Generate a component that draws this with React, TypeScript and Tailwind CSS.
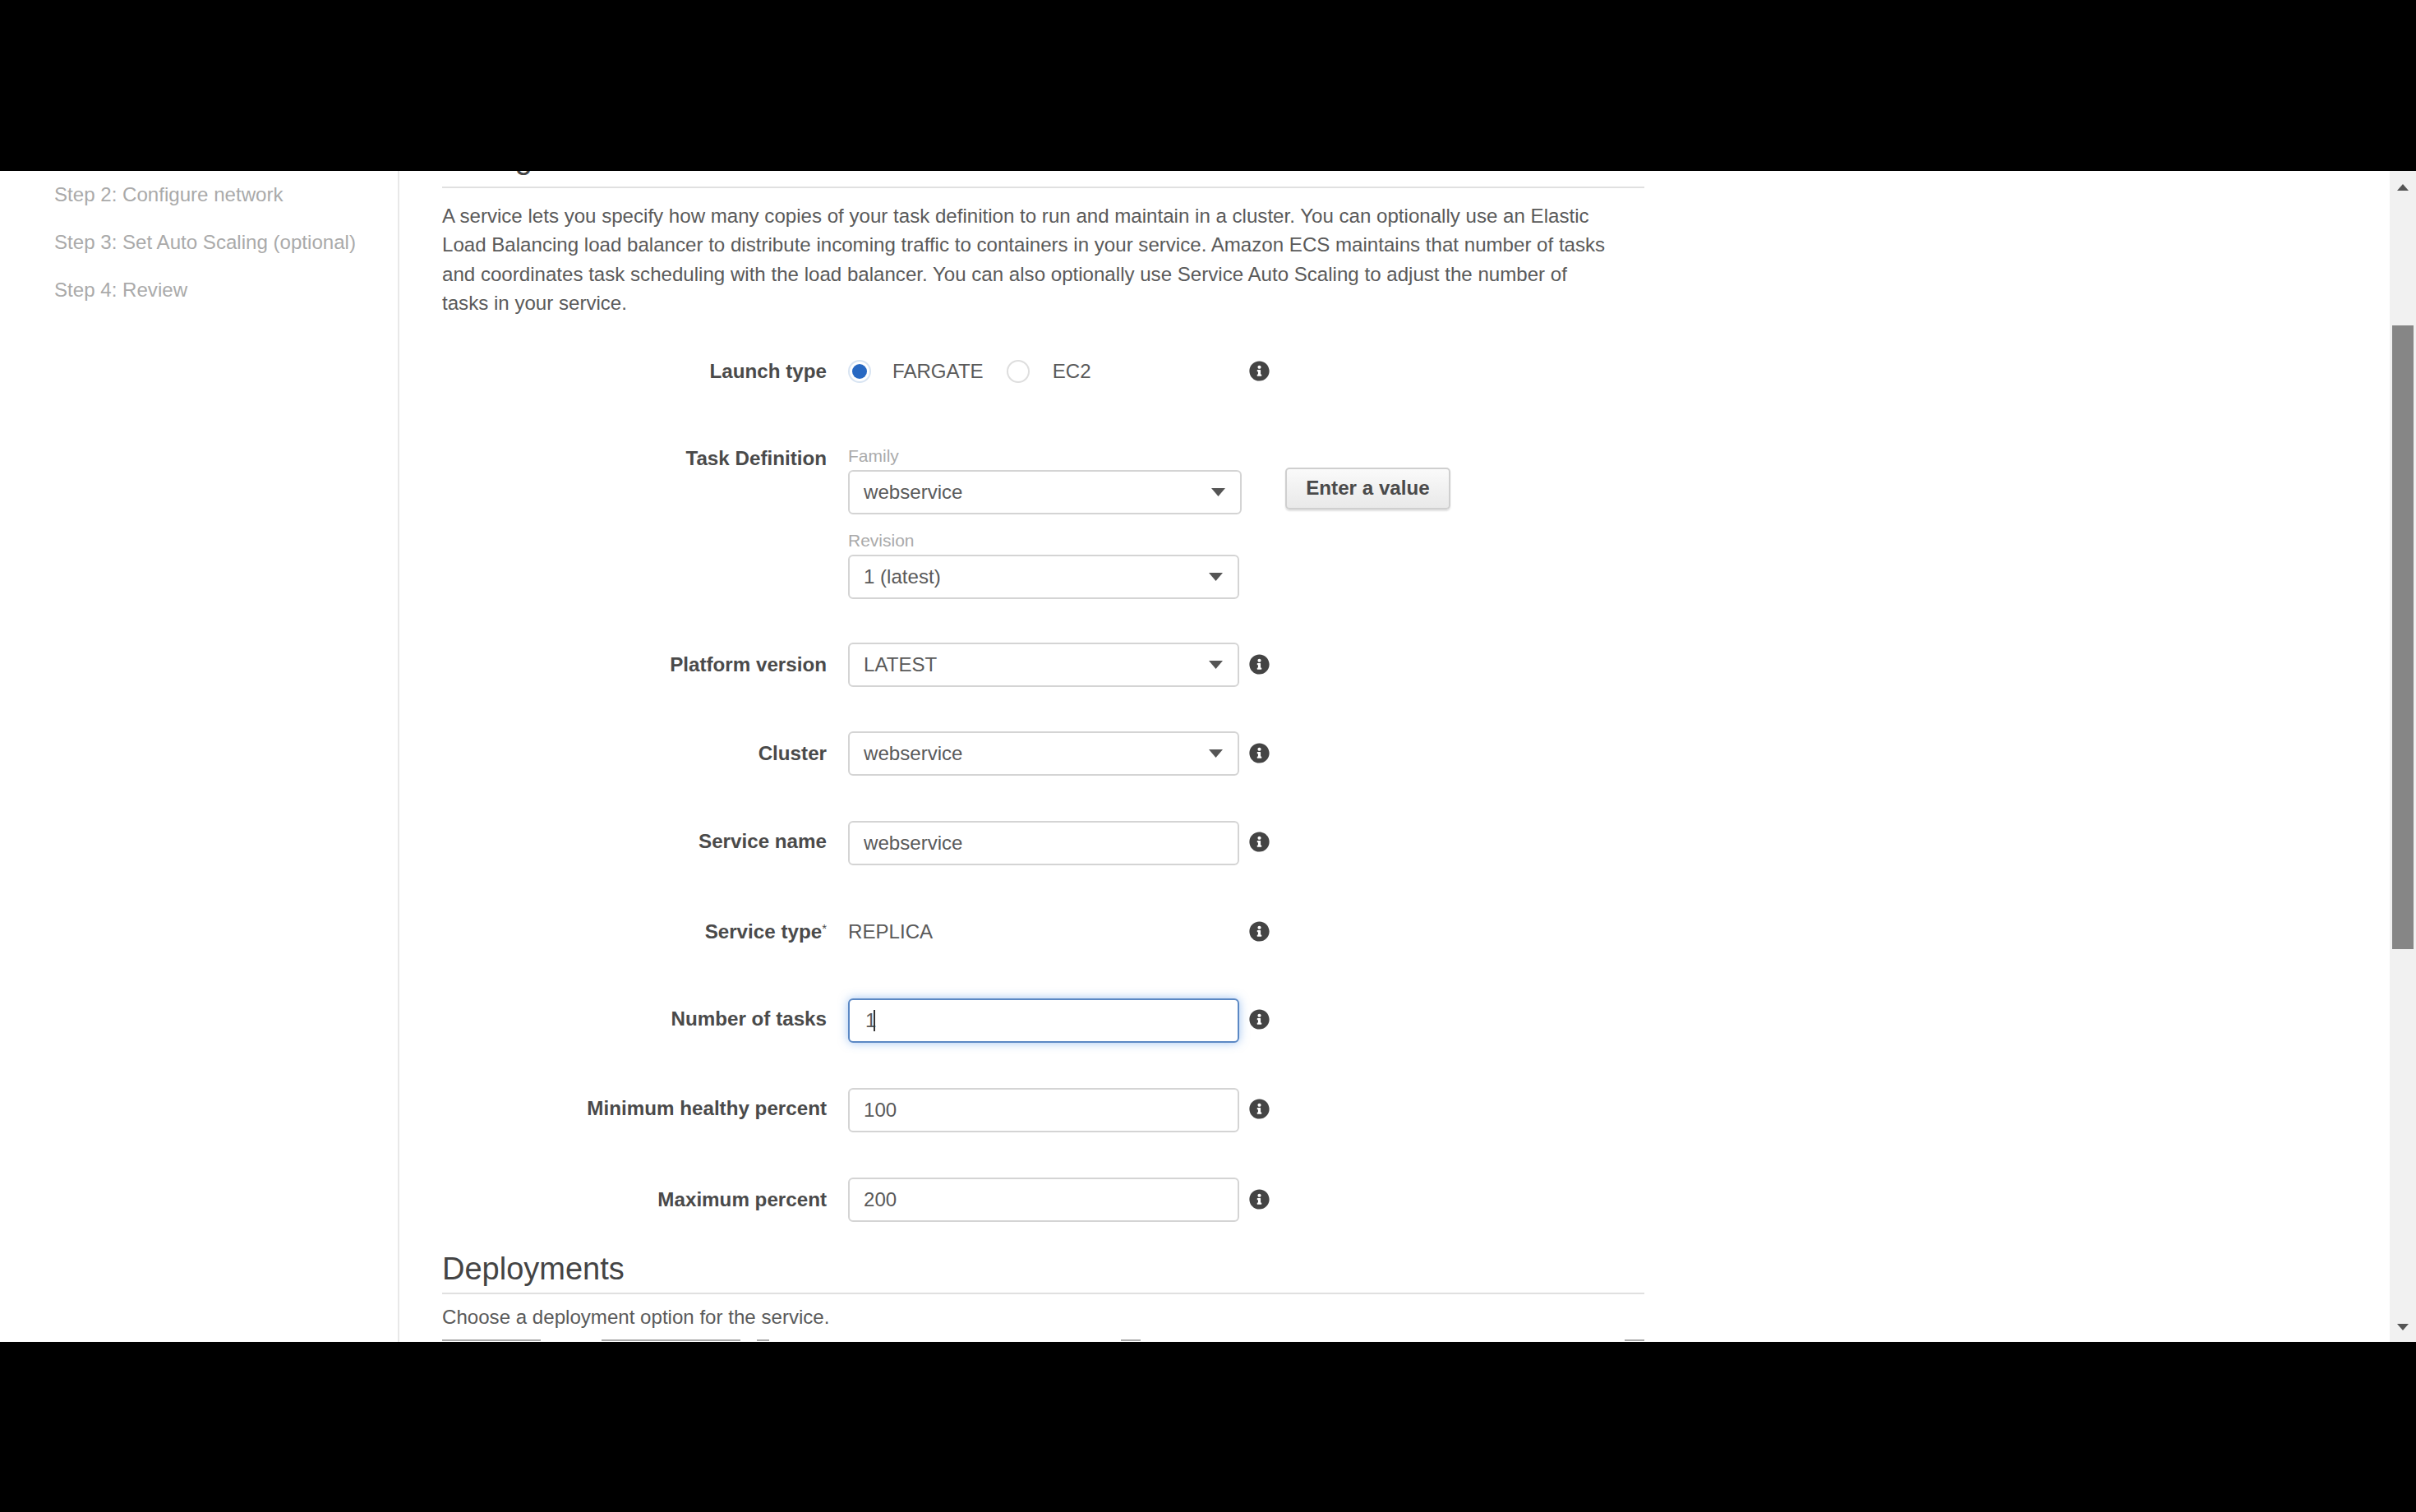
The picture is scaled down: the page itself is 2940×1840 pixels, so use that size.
import { FaInfoCircle } from "react-icons/fa";

function Info({ up }: { up?: boolean }) {
  return <FaInfoCircle className={`ml-[12px] h-[25px] w-[25px] shrink-0 text-[#444] ${up ? "-mt-[3px]" : ""}`} />;
}

function Caret({ className }: { className: string }) {
  return (
    <svg viewBox="0 0 17 10" className={className}>
      <path d="M0 0H17L8.5 10Z" fill="#555" />
    </svg>
  );
}

function Label({ children, up }: { children: React.ReactNode; up?: boolean }) {
  return (
    <div className={`w-[468px] shrink-0 text-right text-[24.2px] leading-[36px] font-bold text-[#4a4a4a] ${up ? "-mt-[3px]" : ""}`}>
      {children}
    </div>
  );
}

function SelectBox({ value, wide }: { value: string; wide?: boolean }) {
  return (
    <div
      className={`flex h-[54px] items-center justify-between rounded-[6px] border-2 border-[#d4d4d4] bg-white pr-[18px] pl-[17px] text-[24.1px] text-[#5a5a5a] ${
        wide ? "w-[479px]" : "w-[476px]"
      }`}
    >
      <span>{value}</span>
      <Caret className="h-[10px] w-[17px]" />
    </div>
  );
}

function InputBox({ value }: { value: string }) {
  return (
    <input
      readOnly
      value={value}
      className="h-[54px] w-[476px] rounded-[6px] border-2 border-[#d4d4d4] bg-white pl-[17px] text-[24.1px] text-[#5a5a5a] outline-none"
    />
  );
}

function Row({
  label,
  className,
  up,
  children,
}: {
  label: React.ReactNode;
  className: string;
  up?: boolean;
  children: React.ReactNode;
}) {
  return (
    <div className={`flex h-[54px] items-center ${className}`}>
      <Label up={up}>{label}</Label>
      <div className="ml-[26px] flex items-center">{children}</div>
    </div>
  );
}

export default function App() {
  return (
    <div className="flex h-[1840px] flex-col bg-black font-['Liberation_Sans',Arial,sans-serif]">
      <div className="h-[208px] shrink-0" />
      <div className="flex h-[1425px] shrink-0 bg-white">
        <aside className="flex w-[486px] shrink-0 flex-col gap-[23px] border-r-2 border-[#e8e8e8] pt-[11px] pl-[66px] text-[24.1px] leading-[35px] text-[#aaa]">
          <div>Step 2: Configure network</div>
          <div>Step 3: Set Auto Scaling (optional)</div>
          <div>Step 4: Review</div>
        </aside>

        <main className="min-w-0 flex-1 overflow-hidden pl-[52px]">
          <div className="w-[1463px]">
            <h2 className="-mt-[40px] border-b-2 border-[#e0e0e0] pb-[11px] text-[38px] leading-[48px] font-normal text-[#444]">
              Configure service
            </h2>
            <p className="mt-[16px] text-[24.1px] leading-[35.4px] text-[#5a5a5a]">
              A service lets you specify how many copies of your task definition to run and maintain in a cluster. You can optionally use an Elastic
              <br />
              Load Balancing load balancer to distribute incoming traffic to containers in your service. Amazon ECS maintains that number of tasks
              <br />
              and coordinates task scheduling with the load balancer. You can also optionally use Service Auto Scaling to adjust the number of
              <br />
              tasks in your service.
            </p>

            <Row label="Launch type" className="mt-[38px]">
              <div className="flex w-[476px] items-center text-[24.1px] text-[#5a5a5a]">
                <span className="flex h-[28px] w-[28px] items-center justify-center rounded-full border-2 border-[#d8e4f2]">
                  <span className="h-[18px] w-[18px] rounded-full bg-[#2768c2]" />
                </span>
                <span className="ml-[26px]">FARGATE</span>
                <span className="ml-[28px] h-[28px] w-[28px] rounded-full border-2 border-[#dedede]" />
                <span className="ml-[28px]">EC2</span>
              </div>
              <Info />
            </Row>

            <div className="mt-[61px] flex items-start">
              <Label>Task Definition</Label>
              <div className="ml-[26px] w-[479px]">
                <div className="h-[30px] text-[21px] leading-[30px] text-[#aaa]">Family</div>
                <div className="mt-[2px]">
                  <SelectBox value="webservice" wide />
                </div>
                <div className="mt-[17px] h-[30px] text-[21px] leading-[30px] text-[#aaa]">Revision</div>
                <div className="mt-[2px]">
                  <SelectBox value="1 (latest)" />
                </div>
              </div>
              <button className="mt-[29px] ml-[53px] h-[51px] w-[201px] rounded-[5px] border-2 border-[#cfcfcf] bg-gradient-to-b from-[#fafafa] to-[#e9e9e9] text-[24.2px] font-bold text-[#4a4a4a] shadow-[0_2px_2px_rgba(0,0,0,0.12)]">
                Enter a value
              </button>
            </div>

            <Row label="Platform version" className="mt-[53px]">
              <SelectBox value="LATEST" />
              <Info />
            </Row>
            <Row label="Cluster" className="mt-[54px]">
              <SelectBox value="webservice" />
              <Info />
            </Row>
            <Row label="Service name" className="mt-[55px]" up>
              <InputBox value="webservice" />
              <Info up />
            </Row>
            <Row
              label={
                <>
                  Service type<span className="align-top text-[15px] leading-[28px] font-normal">*</span>
                </>
              }
              className="mt-[54px]"
            >
              <div className="w-[476px] text-[24.1px] text-[#5a5a5a]">REPLICA</div>
              <Info />
            </Row>
            <Row label="Number of tasks" className="mt-[54px]" up>
              <div className="flex h-[54px] w-[476px] items-center rounded-[6px] border-2 border-[#5b88c4] bg-white pl-[19px] text-[24.1px] text-[#5a5a5a] shadow-[0_0_12px_rgba(70,140,230,0.5)]">
                <span>1</span>
                <span className="ml-[-3px] h-[26px] w-[2px] bg-[#333]" />
              </div>
              <Info up />
            </Row>
            <Row label="Minimum healthy percent" className="mt-[55px]" up>
              <InputBox value="100" />
              <Info up />
            </Row>
            <Row label="Maximum percent" className="mt-[55px]">
              <InputBox value="200" />
              <Info />
            </Row>

            <h2 className="mt-[33px] border-b-2 border-[#e0e0e0] pb-[5px] text-[38px] leading-[48px] font-normal text-[#444]">
              Deployments
            </h2>
            <p className="mt-[10px] text-[24.1px] leading-[35.4px] text-[#5a5a5a]">Choose a deployment option for the service.</p>
            <div className="mt-[10px] flex h-[2px]">
              <div className="w-[123px] bg-[#aaa]" />
              <div className="ml-[74px] w-[173px] bg-[#aaa]" />
              <div className="ml-[20px] w-[16px] bg-[#aaa]" />
              <div className="ml-[428px] w-[24px] bg-[#aaa]" />
              <div className="ml-[589px] w-[25px] bg-[#aaa]" />
            </div>
          </div>
        </main>

        <div className="flex w-[32px] shrink-0 flex-col items-center bg-[#f1f1f1] pt-[16px] pb-[14px]">
          <svg viewBox="0 0 14 8" className="h-[8px] w-[14px] shrink-0">
            <path d="M7 0L14 8H0Z" fill="#555" />
          </svg>
          <div className="mt-[164px] h-[759px] w-[26px] shrink-0 bg-[#868686]" />
          <svg viewBox="0 0 14 8" className="mt-auto h-[8px] w-[14px] shrink-0">
            <path d="M0 0H14L7 8Z" fill="#555" />
          </svg>
        </div>
      </div>
      <div className="flex-1" />
    </div>
  );
}
